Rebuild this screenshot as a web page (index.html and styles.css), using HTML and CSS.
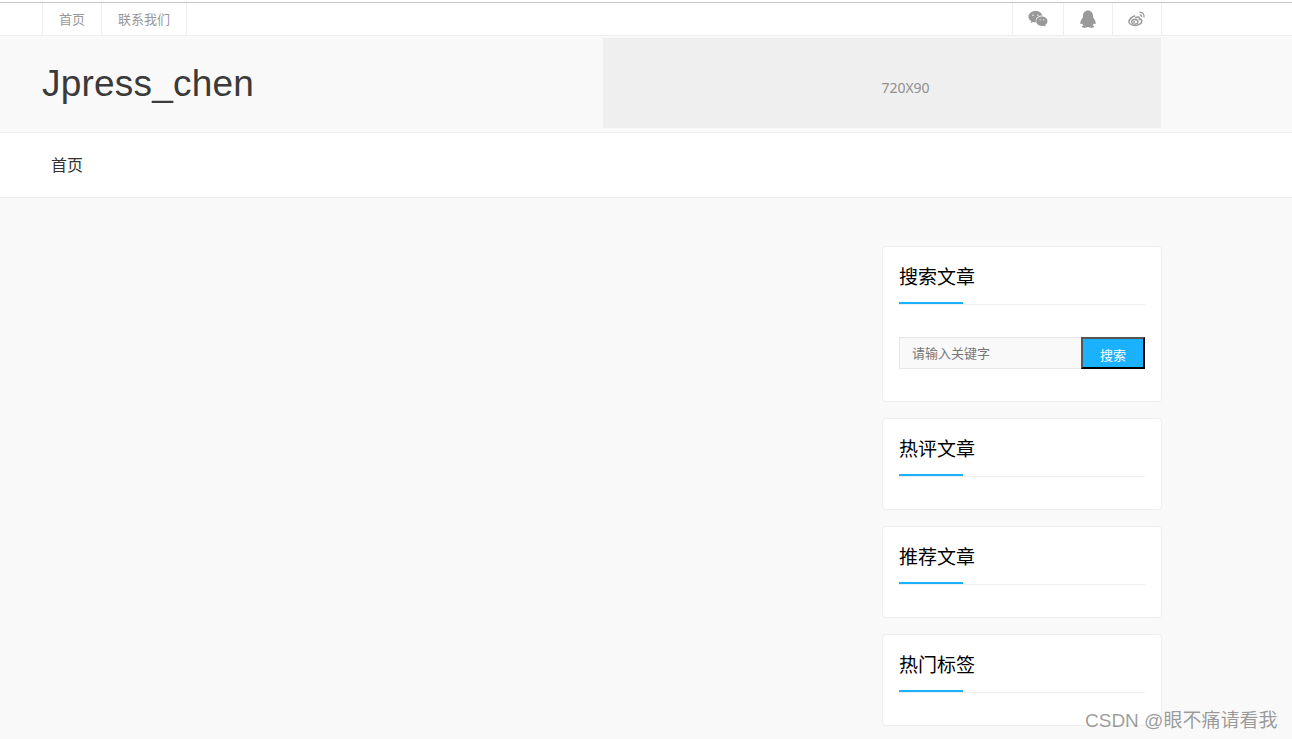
FILE: index.html
```html
<!DOCTYPE html>
<html lang="zh">
<head>
<meta charset="utf-8">
<title>Jpress_chen</title>
<link rel="stylesheet" href="styles.css">
</head>
<body>
<div class="topline"></div>
<div class="topbar">
  <div class="wrap topbar-inner">
    <ul class="toplinks">
      <li><a>首页</a></li>
      <li><a>联系我们</a></li>
    </ul>
    <ul class="topicons">
      <li>
        <svg class="icon" viewBox="0 0 20 18" width="20" height="18"><path fill="#999" d="M7.500 1C3.600 1 .5 3.500.5 6.700c0 1.900 1.100 3.400 2.800 4.500l-.7 2.100 2.500-1.300c.8.200 1.500.3 2.400.3h.5a5 5 0 0 1-.2-1.500c0-3 2.700-5.300 6.200-5.300h.5C13.800 2.900 11 1 7.500 1zM5 4.500a.7.700 0 1 1 0 1.400.7.700 0 0 1 0-1.400zm5 0a.7.700 0 1 1 0 1.400.7.700 0 0 1 0-1.400z"/><path fill="#999" d="M19.500 11.300c0-2.700-2.600-4.700-5.600-4.700-3.200 0-5.700 2-5.700 4.700s2.500 4.700 5.700 4.700c.6 0 1.300-.1 1.900-.3l1.900 1-.5-1.700c1.400-.9 2.300-2.200 2.300-3.700zm-7.400-.9a.6.600 0 1 1 0-1.200.6.600 0 0 1 0 1.200zm3.700 0a.6.600 0 1 1 0-1.200.6.600 0 0 1 0 1.200z"/></svg>
      </li>
      <li>
        <svg class="icon" viewBox="0 0 18 18" width="18" height="18"><path fill="#999" d="M9 .5C6 .5 4 2.800 4 5.700v1.600C2.800 8.800 1.300 11 1.300 13.200c0 1 .7 1.200 2 .2.300.9.700 1.500 1.200 2-1 .3-1.700.8-1.700 1.300 0 .7 1.300 1 3 1 1.200 0 2.200-.2 2.800-.6h.8c.6.400 1.600.6 2.800.6 1.700 0 3-.3 3-1 0-.5-.7-1-1.700-1.300.5-.5.9-1.100 1.200-2 1.300 1 2 .8 2-.2 0-2.200-1.500-4.400-2.700-5.900V5.700C14 2.800 12 .5 9 .5z"/></svg>
      </li>
      <li>
        <svg class="icon" viewBox="0 0 18 16" width="18" height="16"><path fill="none" stroke="#999" stroke-width="1.500" d="M7.200 4.800C4 5.600 1 8.300 1 10.800c0 2.200 2.800 3.700 6 3.700 3.700 0 6.800-2 6.800-4.300 0-1.300-1.300-2-2.400-2.100.5-1.400-.1-2.200-1.500-2-.9.100-1.800.5-2.700 1"/><ellipse cx="6.800" cy="10.800" rx="3.200" ry="2.300" fill="none" stroke="#999" stroke-width="1.300"/><circle cx="6.200" cy="11" r="1" fill="#999"/><path fill="none" stroke="#999" stroke-width="1.200" d="M11.500 1.500c2.900-.5 5.200 2 4.500 5M11.800 4c1.300-.2 2.100.8 1.900 2.100"/></svg>
      </li>
    </ul>
  </div>
</div>
<header class="header">
  <div class="wrap header-inner">
    <h1 class="logo">Jpress_chen</h1>
    <div class="ad">720X90</div>
  </div>
</header>
<nav class="nav">
  <div class="wrap">
    <a class="nav-link">首页</a>
  </div>
</nav>
<main class="wrap content">
  <aside class="sidebar">
    <section class="card">
      <h2 class="card-title">搜索文章</h2>
      <form class="search">
        <input class="search-input" type="text" placeholder="请输入关键字">
        <button class="search-btn" type="button">搜索</button>
      </form>
    </section>
    <section class="card">
      <h2 class="card-title">热评文章</h2>
    </section>
    <section class="card">
      <h2 class="card-title">推荐文章</h2>
    </section>
    <section class="card">
      <h2 class="card-title">热门标签</h2>
    </section>
  </aside>
</main>
<div class="watermark">CSDN @眼不痛请看我</div>
</body>
</html>
```
FILE: styles.css
```css
* { box-sizing: border-box; }
html, body { margin: 0; padding: 0; height: 739px; overflow: hidden; }
body {
  background: #f9f9f9;
  font-family: "Liberation Sans", "Noto Sans CJK SC", sans-serif;
  color: #333;
  position: relative;
}
ul { list-style: none; margin: 0; padding: 0; }
.wrap { width: 1120px; margin-left: 42px; }
.topline { height: 3px; background: #fff; border-bottom: 1px solid #c4c4c4; }
.topbar { height: 33px; background: #fff; border-bottom: 1px solid #eee; }
.topbar-inner { display: flex; justify-content: space-between; height: 32px; }
.toplinks, .topicons { display: flex; }
.toplinks { border-left: 1px solid #eee; }
.toplinks li {
  border-right: 1px solid #eee;
  padding: 0 16px;
  font-size: 13px;
  line-height: 34px;
  color: #999;
}
.topicons { border-left: 1px solid #eee; }
.topicons li {
  border-right: 1px solid #eee;
  display: flex;
  align-items: center;
  justify-content: center;
}
.topicons li:nth-child(1) { width: 51px; }
.topicons li:nth-child(2) { width: 49px; }
.topicons li:nth-child(3) { width: 49px; }
.header { height: 97px; background: #f9f9f9; border-bottom: 1px solid #eee; }
.header-inner { display: flex; justify-content: space-between; height: 96px; padding: 2px 1px 0 0; }
.logo {
  margin: 0;
  font-size: 37px;
  font-weight: 400;
  letter-spacing: 0.2px;
  line-height: 92px;
  color: #3a3a3a;
}
.ad {
  width: 558px;
  height: 90px;
  background: #efefef;
  color: #909090;
  font-family: "Noto Sans", "Noto Sans CJK SC", sans-serif;
  font-size: 14px;
  text-align: center;
  padding: 42px 0 0 47px;
  line-height: 16px;
}
.nav { height: 65px; background: #fff; border-bottom: 1px solid #eee; }
.nav-link {
  display: inline-block;
  padding-left: 9px;
  font-size: 16px;
  line-height: 66px;
  color: #333;
}
.content { display: flex; justify-content: flex-end; padding-top: 48px; }
.sidebar { width: 280px; display: flex; flex-direction: column; gap: 16px; }
.card {
  background: #fff;
  border: 1px solid #eee;
  border-radius: 4px;
  padding: 16px;
  min-height: 92px;
}
.card-title {
  margin: 0;
  height: 42px;
  font-size: 19px;
  font-weight: 400;
  line-height: 30px;
  color: #000;
  border-bottom: 1px solid #eee;
  position: relative;
}
.card-title::after {
  content: "";
  position: absolute;
  left: 0;
  bottom: 0;
  width: 64px;
  height: 2px;
  background: #1ab2ff;
}
.search { display: flex; margin-top: 32px; margin-bottom: 16px; height: 32px; }
.search-input {
  width: 182px;
  height: 32px;
  border: 1px solid #e6e6e6;
  border-right: 0;
  background: #f9f9f9;
  padding: 0 12px;
  font: 13px "Liberation Sans", "Noto Sans CJK SC", sans-serif;
  outline: 0;
}
.search-input::placeholder { color: #777; opacity: 1; }
.search-btn {
  width: 64px;
  height: 32px;
  padding: 2px 0 0;
  background: #1ab2ff;
  color: #fff;
  border: 2px outset #333;
  border-color: #555 #111 #111 #555;
  font: 13px "Liberation Sans", "Noto Sans CJK SC", sans-serif;
}
.watermark {
  position: absolute;
  left: 1085px;
  top: 709px;
  font-size: 19px;
  line-height: 24px;
  color: rgba(90, 90, 90, 0.6);
  white-space: nowrap;
}
```
